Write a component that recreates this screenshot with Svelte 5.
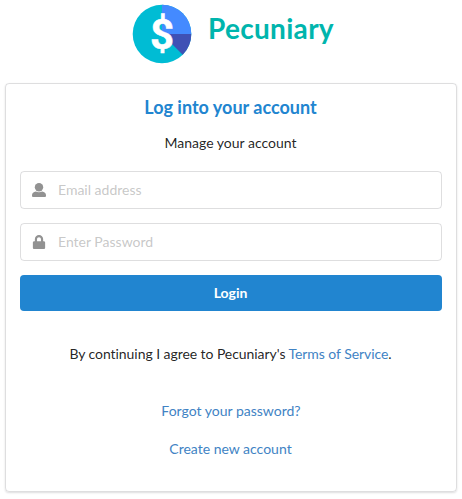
<script>
  let email = $state('');
  let password = $state('');
</script>

<main>
  <header>
    <svg class="logo" viewBox="0 0 60 60" aria-label="Pecuniary logo">
      <circle cx="30" cy="30" r="29.3" fill="#00bcd4" />
      <path d="M30 30V.7A29.3 29.3 0 0 1 59.3 30z" fill="#448aff" />
      <path d="M30 30h29.3a29.3 29.3 0 0 1-8.6 20.7z" fill="#3f51b5" />
      <text x="30" y="44.500" text-anchor="middle">$</text>
    </svg>
    <h1>Pecuniary</h1>
  </header>

  <section>
    <h2>Log into your account</h2>
    <p class="sub">Manage your account</p>
    <form onsubmit={(e) => e.preventDefault()}>
      <label class="field">
        <svg viewBox="0 0 14 14"><circle cx="7" cy="4.200" r="4.200" /><path d="M3.800 8.500C1.600 8.700 0 10.200 0 12.200v.5C0 13.500.5 14 1.300 14h11.400c.8 0 1.300-.5 1.300-1.300v-.5c0-2-1.600-3.500-3.800-3.700C8.300 9.500 5.700 9.500 3.800 8.500z" /></svg>
        <input type="text" placeholder="Email address" bind:value={email} />
      </label>
      <label class="field">
        <svg viewBox="0 0 448 512"><path d="M400 224h-24v-72C376 68.200 307.800 0 224 0S72 68.200 72 152v72H48c-26.500 0-48 21.500-48 48v192c0 26.500 21.500 48 48 48h352c26.500 0 48-21.500 48-48V272c0-26.500-21.500-48-48-48zm-104 0H152v-72c0-39.700 32.300-72 72-72s72 32.300 72 72v72z" /></svg>
        <input type="password" placeholder="Enter Password" bind:value={password} />
      </label>
      <button type="submit">Login</button>
    </form>
    <p class="terms">By continuing I agree to Pecuniary's <a href="#terms">Terms of Service</a>.</p>
    <p class="forgot"><a href="#forgot">Forgot your password?</a></p>
    <p class="create"><a href="#create">Create new account</a></p>
  </section>
</main>

<style>
  :global(body) {
    margin: 0;
    background: #fff;
  }
  main {
    box-sizing: border-box;
    width: 462px;
    height: 499px;
    padding: 4px 5px 0;
    font: 14px/20px Lato, sans-serif;
    font-variant-ligatures: none;
    color: rgba(0, 0, 0, 0.87);
    text-align: center;
    overflow: hidden;
  }
  header {
    display: flex;
    height: 79px;
    padding-left: 127px;
  }
  .logo {
    width: 60px;
    height: 60px;
  }
  .logo text {
    font: bold 42px Roboto, sans-serif;
    fill: #fff;
    stroke: #fff;
    stroke-width: 0.5px;
  }
  h1 {
    margin: 6px 0 0 16px;
    font: bold 28px/36px Lato, sans-serif;
    letter-spacing: 0.3px;
    color: #00b5ad;
  }
  section {
    box-sizing: border-box;
    width: 452px;
    height: 409px;
    padding: 12px 14px;
    border: 1px solid rgba(34, 36, 38, 0.15);
    border-radius: 4px;
    box-shadow: 0 1px 2px 0 rgba(34, 36, 38, 0.15);
  }
  h2 {
    margin: 0 1px 0 0;
    font: bold 18px/23px Lato, sans-serif;
    color: #2185d0;
  }
  p {
    margin: 0;
  }
  .sub {
    margin: 14px 1px 18px 0;
  }
  .field {
    box-sizing: border-box;
    display: flex;
    align-items: center;
    height: 38px;
    margin-bottom: 14px;
    border: 1px solid rgba(34, 36, 38, 0.15);
    border-radius: 4px;
  }
  .field svg {
    width: 36px;
    height: 14px;
    margin-right: 1px;
    flex: none;
    fill: #929292;
  }
  input {
    flex: 1;
    min-width: 0;
    padding: 0 0 2px;
    border: 0;
    outline: 0;
    background: none;
    font: 14px/17px Lato, sans-serif;
    color: inherit;
  }
  input::placeholder {
    color: rgba(191, 191, 191, 0.87);
  }
  button {
    display: block;
    width: 100%;
    height: 36px;
    padding: 0 1px 0 0;
    border: 0;
    border-radius: 4px;
    background: #2185d0;
    color: #fff;
    font: bold 14px/14px Lato, sans-serif;
  }
  .terms {
    margin: 33px 1px 0 0;
    letter-spacing: -0.06px;
  }
  .forgot {
    margin-top: 37px;
  }
  .create {
    margin: 18px 1px 0 0;
  }
  a {
    color: #4183c4;
    text-decoration: none;
  }
</style>
